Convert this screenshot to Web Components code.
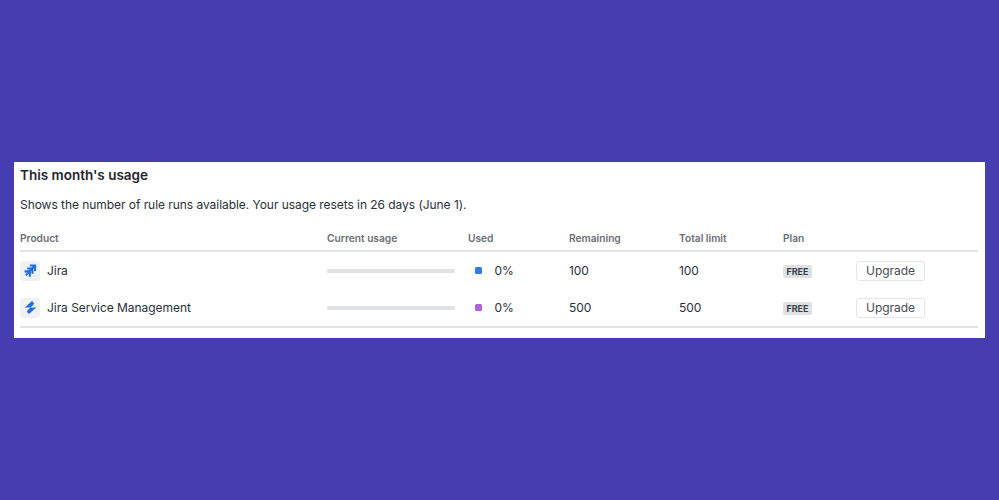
<!DOCTYPE html>
<html><head><meta charset="utf-8"><style>
html,body{margin:0;height:100%}
body{background:#453db0;width:999px;height:500px;overflow:hidden;display:flex;align-items:flex-start;justify-content:center;font-family:Inter,"Liberation Sans",sans-serif;color:#202530}
</style></head><body>
<usage-card>
<span slot="title">This month's usage</span>
<span slot="desc">Shows the number of rule runs available. Your usage resets in 26 days (June 1).</span>
<usage-head></usage-head>
<usage-row name="Jira" color="#2f7de6" remaining="100" total="100" icon="jira"></usage-row>
<usage-row name="Jira Service Management" color="#b45ee0" remaining="500" total="500" icon="jsm"></usage-row>
</usage-card>
<script>
const cols='grid-template-columns:307px 141px 101px 110px 104px 73px 122px;';
customElements.define('usage-card',class extends HTMLElement{constructor(){super();this.attachShadow({mode:'open'}).innerHTML=`<style>
:host{display:block;box-sizing:border-box;width:971px;height:176px;margin-top:162px;background:#fff;padding:4.5px 7px 0 6px}
h2{margin:0;font-size:13.5px;line-height:17px;font-weight:600;color:#1f2430}
p{margin:13.5px 0 0;font-size:12px;letter-spacing:-.05px;line-height:16px;color:#2a2f3a}
.rows{margin-top:13px;border-bottom:2px solid #e1e2e4}
</style><h2><slot name="title"></slot></h2><p><slot name="desc"></slot></p><div class="rows"><slot></slot></div>`}});
customElements.define('usage-head',class extends HTMLElement{constructor(){super();this.attachShadow({mode:'open'}).innerHTML=`<style>
:host{display:grid;${cols}height:23px;padding-bottom:1px;align-items:center;border-bottom:2px solid #e1e2e4;box-sizing:content-box;font-size:10.2px;font-weight:600;color:#6b6e76}
</style><span>Product</span><span>Current usage</span><span>Used</span><span>Remaining</span><span>Total limit</span><span>Plan</span><span></span>`}});
const icons={
jira:`<path d="M7.2 1.6h6.8v6.8h-2.2V5.2L9.2 7.6 7.8 6l2.4-2.2h-3z"/><path d="M4.4 4.7h6.8v6.8H9V8.3L6.4 10.7 5 9.1l2.4-2.2h-3z"/><path d="M1.6 7.8h6.8v6.8H6.2v-3.2l-2.6 2.4L2.2 12.2l2.4-2.2h-3z"/>`,
jsm:`<path d="M9.6 1 1.9 7.9h6.2l3.2-3c.6-.6.5-1.3 0-1.9z"/><path d="M6.4 15l7.7-6.9H7.9l-3.2 3c-.6.6-.5 1.3 0 1.9z"/>`};
customElements.define('usage-row',class extends HTMLElement{connectedCallback(){if(this.shadowRoot)return;const a=n=>this.getAttribute(n);this.attachShadow({mode:'open'}).innerHTML=`<style>
:host{display:grid;${cols}height:37px;align-items:center;font-size:12px;letter-spacing:-.05px;color:#2a2f3a}
.prod{display:flex;align-items:center;gap:7px}
.ic{width:20px;height:20px;border-radius:3px;background:#f0f1f3;display:flex;align-items:center;justify-content:center}
.ic svg{width:15px;height:15px;fill:#1f6fe0}
.bar{width:128px;height:4px;background:#e1e2e4;border-radius:1px}
.used{display:flex;align-items:center;gap:13px;padding-left:6.5px}
.sq{width:7px;height:7px;border-radius:1.5px;background:${a('color')}}
.act{display:flex}
.lozenge{display:inline-block;font-size:9px;line-height:13px;font-weight:700;color:#3a3f4a;background:#dfe1e5;border-radius:2px;padding:0 3.5px}
.btn{box-sizing:border-box;width:69px;height:20px;border:1px solid #e4e5e8;border-radius:3px;display:flex;align-items:center;justify-content:center;color:#484c55;background:#fff}
.plan{display:flex;margin-top:1px}
</style>
<div class="prod"><span class="ic"><svg viewBox="0 0 16 16">${icons[a('icon')]}</svg></span><span>${a('name')}</span></div>
<div><div class="bar"></div></div>
<div class="used"><span class="sq"></span><span>0%</span></div>
<div>${a('remaining')}</div><div>${a('total')}</div>
<div class="plan"><span class="lozenge">FREE</span></div>
<div class="act"><span class="btn">Upgrade</span></div>`}});
</script>
</body></html>
